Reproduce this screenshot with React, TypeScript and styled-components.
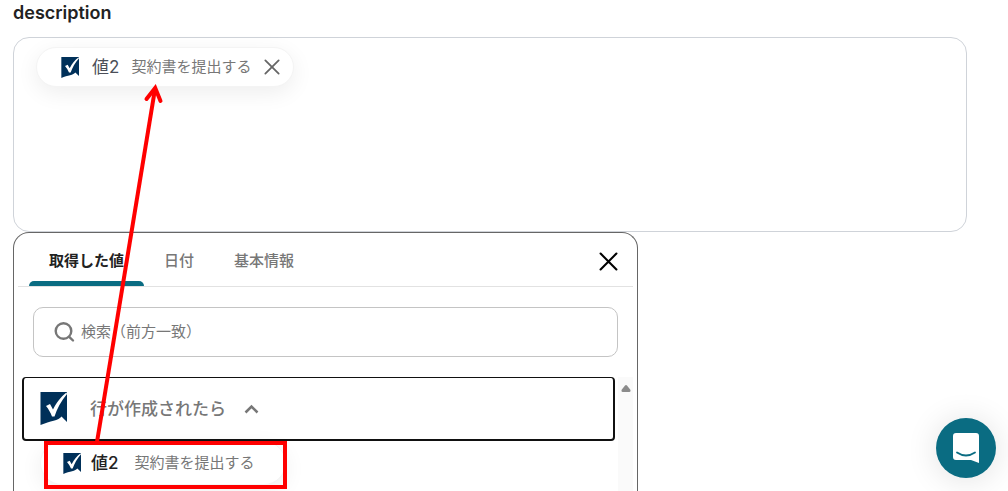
import React from "react";
import styled, { createGlobalStyle } from "styled-components";

const GlobalStyle = createGlobalStyle`
  *, *::before, *::after { box-sizing: border-box; }
  html, body { height: 100%; }
  body {
    margin: 0;
    overflow: hidden;
    background: #fff;
    color: #222;
    font-family: Inter, "Noto Sans CJK JP", sans-serif;
  }
  button, input { font: inherit; color: inherit; }
  #root { height: 100%; }
`;

const Page = styled.main`
  position: relative;
  display: flex;
  flex-direction: column;
  height: 100%;
  padding: 0 41px 0 13px;
`;

const FieldLabel = styled.h2`
  flex: none;
  height: 37px;
  margin: 0;
  font-size: 18px;
  line-height: 26px;
  font-weight: 600;
`;

const Field = styled.section`
  flex: none;
  min-height: 195px;
  padding: 9px 22px;
  border: 1px solid #cfd3d9;
  border-radius: 16px;
`;

const Chip = styled.div`
  display: inline-flex;
  align-items: center;
  height: 40px;
  padding: 0 13px 0 24px;
  border: 1px solid #f4f4f4;
  border-radius: 20px;
  background: #fff;
  box-shadow: 0 6px 22px rgba(0, 0, 0, 0.07);
  white-space: nowrap;
`;

const ChipName = styled.span<{ $strong?: boolean }>`
  margin-left: ${(p) => (p.$strong ? 10 : 13)}px;
  color: ${(p) => (p.$strong ? "#222" : "#4b4f58")};
  font-size: 17px;
  line-height: 24px;
  font-weight: ${(p) => (p.$strong ? 500 : 400)};
`;

const ChipNote = styled.span<{ $gap: number }>`
  margin-left: ${(p) => p.$gap}px;
  color: #777;
  font-size: 15px;
  line-height: 24px;
`;

const IconButton = styled.button<{ $push?: boolean }>`
  display: flex;
  align-items: center;
  justify-content: center;
  margin-left: ${(p) => (p.$push ? "auto" : "13px")};
  padding: 0;
  border: 0;
  background: none;
  color: ${(p) => (p.$push ? "#000" : "#666")};
  cursor: pointer;
`;

const Panel = styled.section`
  display: flex;
  flex: 1;
  flex-direction: column;
  width: 100%;
  max-width: 625px;
  min-height: 0;
  padding: 0 4px;
  border: 1px solid #666;
  border-bottom: 0;
  border-radius: 16px 16px 0 0;
  background: #fff;
`;

const TabBar = styled.div`
  display: flex;
  flex: none;
  align-items: center;
  height: 54px;
  padding: 4px 15px 0 11px;
  border-bottom: 1px solid #e2e2e2;
`;

const Tab = styled.button<{ $active?: boolean }>`
  position: relative;
  align-self: stretch;
  padding: 0 20px 2px;
  border: 0;
  background: none;
  color: ${(p) => (p.$active ? "#222" : "#777")};
  font-size: 15px;
  line-height: 24px;
  font-weight: ${(p) => (p.$active ? 700 : 500)};
  white-space: nowrap;
  cursor: pointer;

  &::after {
    content: "";
    position: absolute;
    right: 0;
    bottom: 0;
    left: 0;
    height: 5px;
    border-radius: 5px 5px 0 0;
    background: ${(p) => (p.$active ? "#0a6c82" : "transparent")};
  }
`;

const SearchBox = styled.label`
  display: flex;
  flex: none;
  align-items: center;
  gap: 6px;
  height: 50px;
  margin: 20px 15px;
  padding: 0 20px;
  border: 1px solid #c4c4c4;
  border-radius: 10px;
`;

const SearchInput = styled.input`
  flex: 1;
  min-width: 0;
  padding: 0;
  border: 0;
  outline: 0;
  background: none;
  font-size: 15px;
  line-height: 24px;

  &::placeholder { color: #777; opacity: 1; }
`;

const ListArea = styled.div`
  display: flex;
  flex: 1;
  min-height: 0;
  overflow: hidden;
`;

const List = styled.div`
  flex: 1;
  min-width: 0;
  padding: 0 3px 0 4px;
`;

const GroupButton = styled.button`
  display: flex;
  align-items: center;
  width: 100%;
  height: 64px;
  padding: 0 16px;
  border: 2px solid #111;
  border-top-width: 1px;
  border-radius: 4px;
  background: #fff;
  color: #777;
  font-size: 17px;
  line-height: 26px;
  font-weight: 500;
  text-align: left;
  cursor: pointer;
`;

const GroupTitle = styled.span`
  margin: 0 18px 0 23px;
`;

const ValueChip = styled(Chip)`
  width: 246px;
  height: 44px;
  margin-left: 18px;
  padding: 0 22px;
  border-radius: 22px;
`;

const ScrollTrack = styled.div`
  display: flex;
  flex: none;
  justify-content: center;
  width: 15px;
  padding-top: 7px;
  background: #fafafa;
`;

const ChatButton = styled.button`
  position: fixed;
  right: 12px;
  bottom: 13px;
  display: flex;
  align-items: center;
  justify-content: center;
  width: 60px;
  height: 60px;
  padding: 0;
  border: 0;
  border-radius: 50%;
  background: #0a6c82;
  box-shadow: 0 2px 32px rgba(0, 0, 0, 0.12);
  cursor: pointer;
`;

const Annotation = styled.svg`
  position: absolute;
  top: 0;
  left: 0;
  pointer-events: none;
`;

function SheetLogo({ width, height }: { width: number; height: number }) {
  return (
    <svg width={width} height={height} viewBox="0 0 27 33" preserveAspectRatio="none" aria-hidden="true">
      <path d="M0.500 0H27V30L21.500 24.500C19 28.500 10 29 0.500 33Z" fill="#003059" />
      <path d="M6 14L10 12L13 17.500C17 10 20.500 5 26.500 0.500L27 2C21 9 17 17 14.500 24.500H12C10.500 20.500 8.500 17 6 14Z" fill="#fff" />
    </svg>
  );
}

function Cross({ size, stroke }: { size: number; stroke: number }) {
  return (
    <svg width={size} height={size} viewBox="0 0 18 18" fill="none" stroke="currentColor" strokeWidth={stroke} strokeLinecap="round" aria-hidden="true">
      <path d="M1.500 1.500L16.500 16.500M16.500 1.500L1.500 16.500" />
    </svg>
  );
}

export default function App() {
  return (
    <>
      <GlobalStyle />
      <Page>
        <FieldLabel>description</FieldLabel>
        <Field aria-label="description">
          <Chip>
            <SheetLogo width={18} height={21} />
            <ChipName>値2</ChipName>
            <ChipNote $gap={12}>契約書を提出する</ChipNote>
            <IconButton type="button" aria-label="削除">
              <Cross size={16} stroke={2} />
            </IconButton>
          </Chip>
        </Field>

        <Panel>
          <TabBar role="tablist">
            <Tab type="button" role="tab" aria-selected="true" $active>取得した値</Tab>
            <Tab type="button" role="tab" aria-selected="false">日付</Tab>
            <Tab type="button" role="tab" aria-selected="false">基本情報</Tab>
            <IconButton type="button" aria-label="閉じる" $push>
              <Cross size={19} stroke={2} />
            </IconButton>
          </TabBar>

          <SearchBox>
            <svg width="21" height="21" viewBox="0 0 21 21" fill="none" stroke="#777" strokeWidth="2.400" strokeLinecap="round" aria-hidden="true">
              <circle cx="9.500" cy="9" r="7.800" />
              <path d="M15.200 14.800L19 18.500" />
            </svg>
            <SearchInput type="text" aria-label="検索" placeholder="検索（前方一致）" />
          </SearchBox>

          <ListArea>
            <List>
              <GroupButton type="button" aria-expanded="true">
                <SheetLogo width={27} height={33} />
                <GroupTitle>行が作成されたら</GroupTitle>
                <svg width="15" height="10" viewBox="0 0 15 10" fill="none" stroke="#777" strokeWidth="2.500" aria-hidden="true">
                  <path d="M1.500 8.500L7.500 2.500L13.500 8.500" />
                </svg>
              </GroupButton>
              <ValueChip>
                <SheetLogo width={18} height={21} />
                <ChipName $strong>値2</ChipName>
                <ChipNote $gap={16}>契約書を提出する</ChipNote>
              </ValueChip>
            </List>
            <ScrollTrack aria-hidden="true">
              <svg width="10" height="8" viewBox="0 0 10 8" fill="#8b8b8b">
                <path d="M4 1.500Q5 0.300 6 1.500L9.500 6Q9.800 8 8.500 8H1.500Q0.200 8 0.500 6Z" />
              </svg>
            </ScrollTrack>
          </ListArea>
        </Panel>

        <Annotation width="300" height="491" viewBox="0 0 300 491" fill="none" stroke="#f00" strokeWidth="4" aria-hidden="true">
          <rect x="46" y="443" width="239" height="44" />
          <path d="M97 442L155 89" />
          <path d="M146.500 99L155.200 88L160.500 101" strokeLinecap="round" strokeLinejoin="miter" />
        </Annotation>

        <ChatButton type="button" aria-label="チャットを開く">
          <svg width="28" height="32" viewBox="0 0 28 32" aria-hidden="true">
            <path d="M4 1H24Q27 1 27 4V31L19 28H4Q1 28 1 25V4Q1 1 4 1Z" fill="#fff" />
            <path d="M5 20.500Q14 26.500 23 20.500" fill="none" stroke="#0a6c82" strokeWidth="1.800" strokeLinecap="round" />
          </svg>
        </ChatButton>
      </Page>
    </>
  );
}
